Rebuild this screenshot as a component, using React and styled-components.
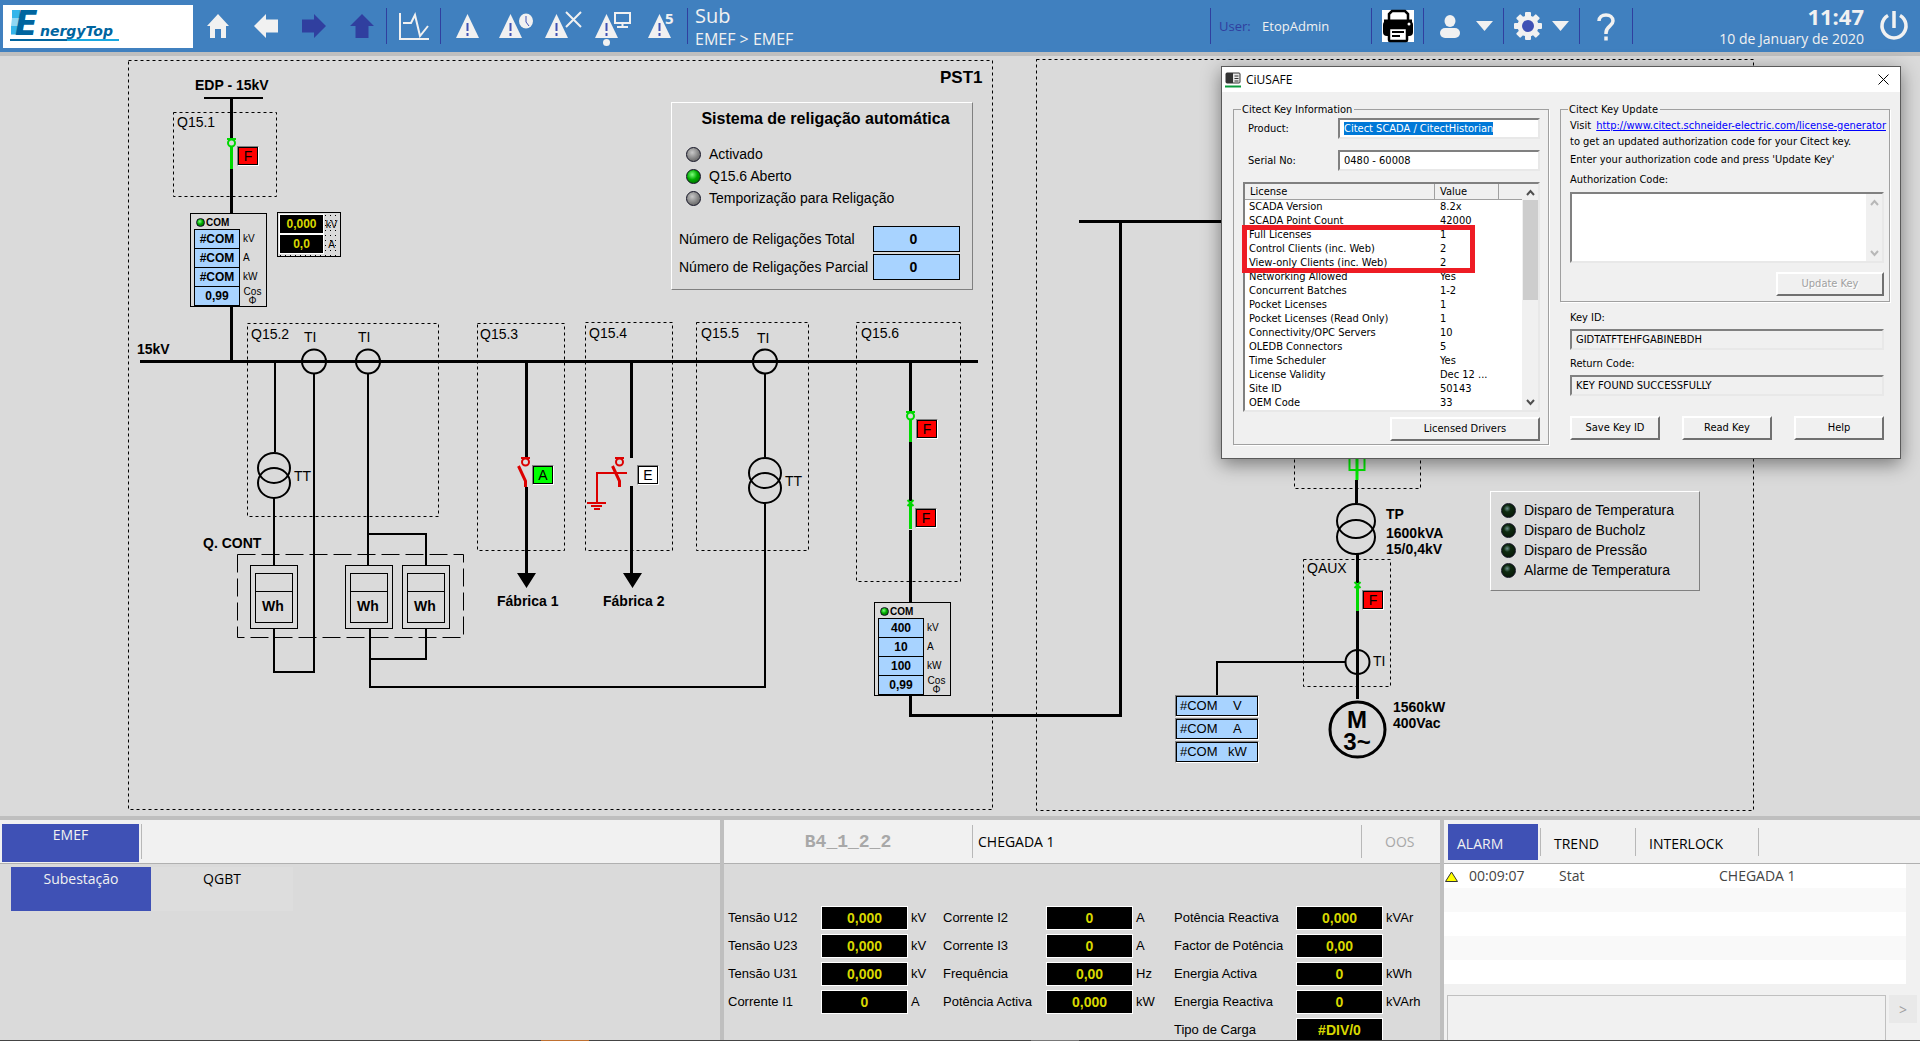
import React, { useEffect, useRef } from "react";
import styled, { createGlobalStyle } from "styled-components";

const GlobalStyle = createGlobalStyle`
  * {
    box-sizing: border-box;
  }

  body {
    margin: 0;
    background: #dadada;
    font-family: "Open Sans", "Noto Sans", sans-serif;
    font-size: 14px;
  }

  button, input, textarea {
    font: inherit;
    margin: 0;
  }
`;

const navy = "#303f9f";
const indigo = "#3f51b5";
const arial = `"Liberation Sans", Arial, sans-serif`;

// everything in the mimic is placed in screen coordinates, the bar takes the first 56px
const BAR = 56;

/* ---------- page ---------- */

const Page = styled.div`
  position: relative;
  display: flex;
  flex-direction: column;
  min-height: 100vh;
  overflow: hidden;
`;

const TopBar = styled.header`
  display: flex;
  flex: none;
  align-items: center;
  height: 56px;
  padding-left: 3px;
  background: #4080bf;
  border-bottom: 4px solid #bfbfbf;
  color: #f1f1f1;
`;

const LogoBox = styled.a`
  display: block;
  width: 190px;
  height: 43px;
  margin-right: 1px;
  background: white;
`;

const IconButton = styled.button`
  display: flex;
  align-items: center;
  justify-content: center;
  width: ${(p) => p.$width || 48}px;
  height: 40px;
  padding: 0;
  border: 0;
  background: none;
  color: ${(p) => p.$color || "#f1f1f1"};
  cursor: pointer;

  svg {
    flex: none;
    overflow: visible;
  }
`;

const MenuButton = styled(IconButton)`
  width: 18px;
  margin-right: 9px;
`;

const Rule = styled.i`
  width: 1px;
  height: 36px;
  background: ${navy};
`;

const Alerts = styled.div`
  display: flex;
  gap: 12px;
  padding: 0 14px 0 15px;
`;

const Titles = styled.div`
  flex: 1;
  padding-left: 7px;
`;

const Title = styled.h1`
  margin: 0;
  font-size: 20px;
  font-weight: 400;
  line-height: 26px;
`;

const Crumbs = styled.p`
  margin: 0;
  font-size: 16px;
  line-height: 20px;
`;

const UserInfo = styled.p`
  width: 160px;
  margin: 0;
  padding-left: 8px;
  font-size: 13px;

  span {
    margin-right: 8px;
    color: ${navy};
  }
`;

const Clock = styled.div`
  flex: 0 0 235px;
  padding-right: 4px;
  text-align: right;

  strong {
    display: block;
    font-size: 22px;
    line-height: 26px;
  }

  span {
    line-height: 20px;
  }
`;

/* ---------- mimic ---------- */

const Mimic = styled.main`
  position: relative;
  flex: 1;
  min-height: 760px;
  overflow: hidden;
  font-family: ${arial};
`;

const Drawing = styled.svg`
  display: block;
  width: 1920px;
  height: 760px;
  fill: none;
  stroke: black;
`;

const Label = styled.text`
  fill: black;
  stroke: none;
  font-size: ${(p) => p.$size || 14}px;
  font-weight: ${(p) => (p.$bold ? 700 : 400)};
`;

const Node = styled.div`
  position: absolute;
  left: ${(p) => p.$x}px;
  top: ${(p) => p.$y - BAR}px;
`;

const TagBox = styled(Node)`
  width: 22px;
  height: 20px;
  border: 1px solid;
  border-color: #808080 white white #808080;

  span {
    display: block;
    height: 18px;
    border: 1px solid black;
    background: ${(p) => p.$fill};
    font-size: 14px;
    line-height: 17px;
    text-align: center;
  }
`;

const Raised = styled(Node)`
  border: 1px solid;
  border-color: white #808080 #808080 white;
  font-size: 14px;
`;

const leds = {
  gray: "radial-gradient(circle at 40% 35%, #c8c8c8, #7c7c7c 60%, #555)",
  green: "radial-gradient(circle at 40% 35%, #7dff7d, #0a0 45%, #005500)",
  dark: "radial-gradient(circle at 40% 35%, #6b8f8b, #0e2a10 30%, #041004)",
};

const Led = styled.i`
  flex: none;
  width: ${(p) => p.$size || 15}px;
  height: ${(p) => p.$size || 15}px;
  border: 1px solid #112;
  border-radius: 50%;
  background: ${(p) => leds[p.$tone]};
`;

const AutoPanel = styled(Raised)`
  width: 302px;
  height: 188px;
  padding: 6px 12px 0 7px;

  h2 {
    margin: 0 0 14px;
    padding-left: 12px;
    font-size: 16px;
    line-height: 20px;
    text-align: center;
  }
`;

const LedLine = styled.p`
  display: flex;
  align-items: center;
  gap: 8px;
  height: ${(p) => p.$pitch || 22}px;
  margin: 0;
  padding-left: 7px;
`;

const Counters = styled.div`
  display: grid;
  gap: 2px;
  margin-top: 17px;
`;

const Counter = styled.label`
  display: flex;
  align-items: center;
  justify-content: space-between;
  white-space: nowrap;

  output {
    width: 87px;
    height: 26px;
    padding-right: 6px;
    border: 1px solid black;
    background: #a8d3ff;
    font-weight: 700;
    line-height: 24px;
    text-align: center;
  }
`;

const TripPanel = styled(Raised)`
  width: 210px;
  height: 100px;
  padding: 8px 3px;
`;

const ComBox = styled(Node)`
  width: 77px;
  height: 94px;
  padding: 2px 3px;
  border: 1px solid black;
  background: #dadada;
  font-size: 10px;

  header {
    display: flex;
    align-items: center;
    gap: 1px;
    height: 13px;
    padding-left: 2px;
    font-weight: 700;
  }
`;

const ComRow = styled.div`
  display: flex;
  align-items: center;
  gap: 3px;
  height: 19px;
  line-height: 9px;

  b {
    display: block;
    width: 46px;
    height: 20px;
    border: 1px solid black;
    background: #a8d3ff;
    font-size: 12px;
    line-height: 18px;
    text-align: center;
  }

  span {
    max-width: 19px;
    text-align: center;
  }
`;

const MiniMeter = styled(Node)`
  display: grid;
  grid-template-columns: 45px 1fr;
  align-content: start;
  align-items: center;
  width: 64px;
  height: 45px;
  padding: 1px;
  border: 1px solid black;
  background: radial-gradient(black 0.5px, transparent 0.5px) 0 0 / 5px 5px #dadada;
  font-size: 10px;
  text-align: center;

  b {
    height: 20px;
    border: 1px solid white;
    background: black;
    color: #d8d800;
    font-size: 12px;
    line-height: 18px;
  }
`;

const ComField = styled(Node)`
  width: 84px;
  height: 22px;
  border: 1px solid;
  border-color: #808080 white white #808080;

  div {
    display: flex;
    height: 20px;
    padding-left: 3px;
    border: 1px solid black;
    background: #a8d3ff;
    font-size: 13px;
    line-height: 18px;
  }

  span {
    flex: 1;
    text-align: center;
  }
`;

/* ---------- dialog ---------- */

const Dialog = styled.section`
  position: absolute;
  left: 1221px;
  top: 66px;
  width: 680px;
  border: 1px solid #5a5a5a;
  background: #f0f0f0;
  box-shadow: 0 5px 18px rgba(0, 0, 0, 0.45);
  color: black;
  font-family: "DejaVu Sans Condensed", "Open Sans", sans-serif;
  font-size: 11px;
  line-height: 16px;
`;

const DialogTitle = styled.header`
  display: flex;
  align-items: center;
  gap: 5px;
  height: 25px;
  padding: 0 9px 0 3px;
  background: white;
  font-family: "Open Sans", sans-serif;

  h2 {
    flex: 1;
    margin: 0;
    font-size: 12px;
    font-weight: 400;
  }

  button {
    display: flex;
    padding: 2px;
    border: 0;
    background: none;
  }
`;

const DialogBody = styled.div`
  display: grid;
  grid-template-columns: 316px 330px;
  gap: 11px;
  padding: 10px 11px 13px;
`;

const Group = styled.fieldset`
  min-width: 0;
  margin: 0;
  padding: ${(p) => p.$pad};
  border: 1px solid #a0a0a0;
  box-shadow: 1px 1px 0 white;

  legend {
    height: 14px;
    margin-left: ${(p) => p.$indent}px;
    padding: 0 2px 0 1px;
    line-height: 16px;
  }
`;

const sunken = `
  border: 2px solid;
  border-color: #808080 #e8e8e8 #e8e8e8 #808080;
  border-radius: 0;
  outline: 0;
`;

const Field = styled.input`
  ${sunken}
  display: block;
  width: 100%;
  height: 21px;
  padding: 0 4px;
  background: ${(p) => (p.readOnly && p.$flat ? "#f0f0f0" : "white")};

  &::selection {
    background: #0078d7;
    color: white;
  }
`;

const FieldRow = styled.div`
  display: grid;
  grid-template-columns: 95px 1fr;
  align-items: center;
  margin-bottom: 11px;

  label {
    padding-left: 5px;
  }
`;

const WinButton = styled.button`
  width: ${(p) => p.$width || 90}px;
  height: 24px;
  padding: 0;
  border: 2px solid;
  border-color: white #707070 #707070 white;
  border-radius: 0;
  background: #f0f0f0;
  color: black;

  &:disabled {
    color: #a0a0a0;
    text-shadow: 1px 1px white;
  }
`;

const Align = styled.div`
  display: flex;
  justify-content: ${(p) => p.$to || "flex-end"};
  margin-top: ${(p) => p.$top}px;
`;

const List = styled.div`
  ${sunken}
  display: flex;
  height: 230px;
  background: white;
`;

const Licenses = styled.table`
  flex: 1;
  align-self: flex-start;
  border-collapse: separate;
  border-spacing: 0;
  table-layout: fixed;
  line-height: 14px;

  th {
    height: 16px;
    padding: 0 0 0 5px;
    border-right: 1px solid #a0a0a0;
    border-bottom: 1px solid #a0a0a0;
    background: #f0f0f0;
    font-weight: 400;
    text-align: left;
  }

  th:last-child {
    border-right: 0;
  }

  td {
    height: 14px;
    padding: 0 0 0 4px;
    white-space: nowrap;
  }

  td + td {
    padding-left: 5px;
  }
`;

const Scroll = styled.div`
  display: flex;
  flex-direction: column;
  align-items: center;
  justify-content: space-between;
  width: ${(p) => p.$width || 16}px;
  background: #f0f0f0;
  color: ${(p) => p.$color || "#505050"};

  i {
    width: 15px;
    height: 100px;
    margin-bottom: 94px;
    background: #cdcdcd;
  }
`;

const Marker = styled.div`
  position: absolute;
  left: 20px;
  top: 158px;
  width: 233px;
  height: 48px;
  border: 5px solid #ee1c24;
`;

const Line = styled.p`
  margin: 0;
  padding-top: ${(p) => p.$top || 0}px;
  white-space: nowrap;

  a {
    margin-left: 2px;
    color: #0000ff;
  }
`;

const CodeBox = styled.div`
  ${sunken}
  display: flex;
  height: 71px;
  margin-top: 4px;
  background: white;

  textarea {
    flex: 1;
    padding: 2px;
    border: 0;
    outline: 0;
    background: white;
    resize: none;
  }
`;

const KeyFields = styled.div`
  padding: 8px 6px 0 10px;

  label {
    display: block;
    margin-bottom: 3px;
  }

  input {
    margin-bottom: 6px;
  }
`;

/* ---------- lower panels ---------- */

const Panels = styled.div`
  display: grid;
  flex: none;
  grid-template-columns: 3fr 3fr 2fr;
  height: 224px;
  border-top: 4px solid #bfbfbf;
  overflow: hidden;
`;

const Panel = styled.section`
  min-width: 0;
  height: 220px;

  & + & {
    border-left: 4px solid #bfbfbf;
  }
`;

const Strip = styled.div`
  display: flex;
  height: 44px;
  padding: ${(p) => p.$pad || "4px 0 0 2px"};
  border-bottom: 1px solid #b0b0b0;
  background: #f1f1f1;
`;

const Tab = styled.button`
  width: ${(p) => p.$width}px;
  height: ${(p) => p.$height}px;
  padding: 0 0 ${(p) => p.$lift || 0}px;
  border: 0;
  background: ${(p) => (p.$on ? indigo : p.$bg || "transparent")};
  color: ${(p) => (p.$on ? "#f1f1f1" : "black")};
`;

const Thin = styled.i`
  width: 1px;
  height: ${(p) => p.$height}px;
  margin: ${(p) => p.$margin || "0 0 0 2px"};
  background: #b8b8b8;
`;

const SubTabs = styled.div`
  display: flex;
  padding: 3px 0 0 11px;
`;

const TagName = styled.div`
  width: 248px;
  color: #a8a8a8;
  font-family: "Liberation Mono", monospace;
  font-size: 18px;
  font-weight: 700;
  line-height: 34px;
  text-align: center;
`;

const TagText = styled.div`
  flex: ${(p) => p.$flex || "0 0 78px"};
  padding-left: ${(p) => p.$left}px;
  color: ${(p) => p.$color || "black"};
  line-height: 34px;
`;

const Readings = styled.div`
  display: grid;
  grid-template-columns: 215px 231px 1fr;
  padding: 42px 0 0 4px;
  font-family: ${arial};
  font-size: 13px;
`;

const Reading = styled.div`
  display: grid;
  grid-template-columns: ${(p) => p.$label}px 87px 1fr;
  height: 24px;
  margin-bottom: 4px;
  line-height: 23px;
  white-space: nowrap;

  output {
    border: 1px solid white;
    background: black;
    color: #d8d800;
    font-size: 14px;
    font-weight: 700;
    line-height: 22px;
    text-align: center;
  }

  span {
    padding-left: 3px;
  }
`;

const AlarmPanel = styled(Panel)`
  background: #f1f1f1;
`;

const AlarmTab = styled.button`
  height: 36px;
  width: ${(p) => p.$width}px;
  padding: 2px 0 0 ${(p) => p.$left}px;
  border: 0;
  background: ${(p) => (p.$on ? indigo : "transparent")};
  color: ${(p) => (p.$on ? "#f1f1f1" : "black")};
  text-align: left;
`;

const AlarmTable = styled.table`
  width: calc(100% - 14px);
  border-spacing: 0;
  table-layout: fixed;
  color: #444;

  td {
    height: 24px;
    padding: 0 1px;
    line-height: 20px;
  }

  tr {
    background: white;
  }

  tr:nth-child(even) {
    background: #f9f9f9;
  }

  svg {
    display: block;
  }
`;

const Detail = styled.div`
  display: flex;
  gap: 3px;
  padding: 11px 3px 0;

  textarea {
    flex: 1;
    height: 50px;
    border: 1px solid #c0c0c0;
    outline: 0;
    background: #f1f1f1;
    resize: none;
  }

  button {
    width: 28px;
    height: 28px;
    padding: 0;
    border: 0;
    background: #e9e9e9;
    color: #a0a0a0;
  }
`;

const Edge = styled.footer`
  height: 1px;
  background: linear-gradient(
    90deg,
    #444 541px,
    #c07030 541px,
    #c07030 589px,
    #444 589px,
    #444 1031px,
    #777 1031px,
    #777 1079px,
    #444 1079px
  );
`;

/* ---------- icons ---------- */

const Logo = () => (
  <svg width="190" height="43" role="img" aria-label="EnergyTop">
    <path d="M9 5h8v8H9z" fill="#35b5ea" />
    <path d="M9 13h7v8H8z" fill="#8fd6f3" />
    <path d="M8 21h7v8H8z" fill="#35b5ea" />
    <path d="M8 29h7v-2h5l-3 3H8z" fill="#8fd6f3" />
    <text x="12" y="30" fill="#00659f" fontSize="33" fontWeight="700" fontStyle="italic" fontFamily="DejaVu Sans">
      E
    </text>
    <text x="37" y="31" fill="#00659f" fontSize="14" fontWeight="700" fontStyle="italic" fontFamily="DejaVu Sans">
      nergyTop
    </text>
    <path d="M7 35h57" stroke="#00659f" strokeWidth="2" />
    <path d="M64 35h52" stroke="#18a8e0" strokeWidth="2" />
  </svg>
);

const Home = () => (
  <svg width="22" height="24" fill="currentColor">
    <path d="M11 0 22 12h-3v12h-5v-9H8v9H3V12H0z" />
  </svg>
);

const Arrow = ({ turn }) => (
  <svg width="24" height="24" fill="currentColor">
    <path d="M0 12 12 0v5.500h12v13H12V24z" transform={`rotate(${turn} 12 12)`} />
  </svg>
);

const Chart = () => (
  <svg width="30" height="27" fill="none" stroke="currentColor" strokeWidth="2">
    <path d="M1 0v26h29M4 10h8l4-8 5 21 8-10" />
  </svg>
);

const Alert = ({ width, children }) => (
  <svg width={width} height="24" fill="currentColor">
    <path d="M11.500 0 23 24H0z" />
    <path d="M11.500 9v8M11.500 19v3" stroke={indigo} strokeWidth="2" />
    {children}
  </svg>
);

const Caret = () => (
  <svg width="18" height="10" fill="currentColor">
    <path d="M0 0h17L8.500 10z" />
  </svg>
);

const Printer = () => (
  <svg width="32" height="32">
    <path d="M0 0h32v32H0z" fill="white" />
    <rect x="1" y="11" width="30" height="15" rx="4" fill="black" />
    <path d="M7 12V4l3-3h13l3 3v8z" fill="white" stroke="black" strokeWidth="2.500" />
    <path d="M2 11h28" stroke="black" strokeWidth="3" />
    <rect x="7" y="18" width="18" height="13" rx="1" fill="white" stroke="black" strokeWidth="2.500" />
    <path d="M10 22h12M10 26h8" stroke="black" strokeWidth="2" />
    <circle cx="27" cy="14" r="1.500" fill="white" />
  </svg>
);

const Person = () => (
  <svg width="20" height="23" fill="currentColor">
    <ellipse cx="10" cy="6" rx="5.500" ry="6" />
    <rect x="0" y="13" width="20" height="10" rx="5" />
  </svg>
);

const Gear = () => (
  <svg width="28" height="28" fill="currentColor">
    {[0, 45, 90, 135].map((a) => (
      <rect key={a} x="11" y="0" width="6" height="28" rx="1" transform={`rotate(${a} 14 14)`} />
    ))}
    <circle cx="14" cy="14" r="10.500" />
    <circle cx="14" cy="14" r="6" fill={indigo} />
  </svg>
);

const Help = () => (
  <svg width="18" height="27" fill="none" stroke="currentColor" strokeWidth="3.500">
    <path d="M2 8c0-4 3-6 7-6s7 2 7 6c0 5-7 5-7 12v1" />
    <path d="M9 23.500v4" />
  </svg>
);

const Power = () => (
  <svg width="28" height="30" fill="none" stroke="currentColor" strokeWidth="3.500">
    <path d="M14 0v17M8 4.500a12 12 0 1 0 12 0" />
  </svg>
);

const Chevron = ({ up }) => (
  <svg width="15" height="16" fill="none" stroke="currentColor" strokeWidth="2">
    <path d={up ? "M4 11l3.500-4L11 11" : "M4 6l3.500 4L11 6"} />
  </svg>
);

/* ---------- mimic symbols ---------- */

const Frame = ({ x, y, r, b, dash = "3 3" }) => (
  <rect x={x + 0.5} y={y + 0.5} width={r - x} height={b - y} strokeDasharray={dash} />
);

const Coil = ({ x, y }) => <circle cx={x} cy={y} r="12" strokeWidth="2" />;

const Transformer = ({ x, y, rx = 16, ry = 15, step = 15 }) => (
  <g strokeWidth="2">
    <ellipse cx={x} cy={y + ry} rx={rx} ry={ry} />
    <ellipse cx={x} cy={y + ry + step} rx={rx} ry={ry} />
  </g>
);

const Meter = ({ x }) => (
  <g>
    <rect x={x + 0.5} y="565.5" width="47" height="63" />
    <rect x={x + 5.5} y="573.5" width="37" height="49" />
    <path d={`M${x + 5} 591.500h38`} />
    <Label x={x + 23} y="611" textAnchor="middle" $bold>
      Wh
    </Label>
  </g>
);

const Switch = ({ x, y }) => (
  <g stroke="#00d800" strokeWidth="2">
    <path d={`M${x - 4.5} ${y}h9`} />
    <circle cx={x} cy={y + 4} r="3.500" />
    <path d={`M${x} ${y + 8}v22`} strokeWidth="3" />
  </g>
);

const Breaker = ({ x, y }) => (
  <g stroke="#00d800" strokeWidth="2">
    <path d={`M${x - 3} ${y - 3}l6 6m0-6l-6 6`} />
    <path d={`M${x} ${y}v26`} strokeWidth="3" />
  </g>
);

const OpenSwitch = ({ x }) => (
  <g stroke="#dc0000" strokeWidth="2">
    <path d={`M${x - 4.5} 458h9`} />
    <circle cx={x} cy="462" r="3.500" />
    <path d={`M${x - 7} 466l7 15v6`} strokeWidth="3" />
  </g>
);

const Tag = ({ x, y, fill = "#f00", children }) => (
  <TagBox $x={x} $y={y} $fill={fill}>
    <span>{children}</span>
  </TagBox>
);

const Com = ({ x, y, values }) => (
  <ComBox $x={x} $y={y}>
    <header>
      <Led $tone="green" $size={9} />
      COM
    </header>
    {["kV", "A", "kW", "Cos Φ"].map((unit, i) => (
      <ComRow key={unit}>
        <b>{values[i]}</b>
        <span>{unit}</span>
      </ComRow>
    ))}
  </ComBox>
);

const frames = [
  { x: 128, y: 60, r: 992, b: 809 },
  { x: 1036, y: 59, r: 1753, b: 810 },
  { x: 173, y: 112, r: 276, b: 196 },
  { x: 247, y: 323, r: 438, b: 516 },
  { x: 477, y: 323, r: 564, b: 550 },
  { x: 585, y: 322, r: 672, b: 550 },
  { x: 696, y: 322, r: 808, b: 550 },
  { x: 856, y: 322, r: 960, b: 581 },
  { x: 1294, y: 400, r: 1420, b: 488 },
  { x: 1303, y: 559, r: 1390, b: 686 },
  { x: 237, y: 554, r: 463, b: 637, dash: "18 6" },
];

const labels = [
  [177, 127, "Q15.1"],
  [251, 339, "Q15.2"],
  [480, 339, "Q15.3"],
  [589, 338, "Q15.4"],
  [701, 338, "Q15.5"],
  [861, 338, "Q15.6"],
  [304, 342, "TI"],
  [358, 342, "TI"],
  [757, 343, "TI"],
  [294, 481, "TT"],
  [785, 486, "TT"],
  [1373, 666, "TI"],
  [1307, 573, "QAUX"],
];

const boldLabels = [
  [195, 90, "EDP - 15kV"],
  [137, 354, "15kV"],
  [203, 548, "Q. CONT"],
  [497, 606, "Fábrica 1"],
  [603, 606, "Fábrica 2"],
  [1386, 519, "TP"],
  [1386, 538, "1600kVA"],
  [1386, 554, "15/0,4kV"],
  [1393, 712, "1560kW"],
  [1393, 728, "400Vac"],
];

const Substation = () => (
  <Mimic>
    <Drawing viewBox="0 56 1920 760">
      {frames.map((f) => (
        <Frame key={`${f.x}-${f.y}`} {...f} />
      ))}
      <g strokeWidth="3">
        <path d="M140 361.500H978" />
        <path d="M231.500 98v40M231.500 169v45M231.500 307v54" />
        <path d="M526.500 361v96M526.500 487v88M631.500 361v97M631.500 486v88" />
        <path d="M910.500 361v50M910.500 441v60M910.500 530v72" />
        <path d="M910.500 696v19.500h210V221.500M1079 221.500h150" />
        <path d="M1356.500 480v23M1357.500 553v30M1357.500 609v90" />
      </g>
      <g strokeWidth="2">
        <path d="M204 98h59" />
        <path d="M275 361v91M274 498v67M274 629v43h40V374" />
        <path d="M368 374v191M368 534h58v31M426 629v30h-56M370 629v58h395V503" />
        <path d="M765 374v83M1345 662h-128v34" />
      </g>
      <path d="M517 573h19l-9.500 15zM623 573h19l-9.500 15z" fill="black" stroke="none" />
      <Coil x={314} y={361.5} />
      <Coil x={368} y={361.5} />
      <Coil x={765} y={361.5} />
      <Coil x={1357.5} y={662} />
      <Transformer x={274} y={453} />
      <Transformer x={765} y={458} />
      <Transformer x={1356} y={504} rx={19} ry={17} step={16} />
      <Meter x={250} />
      <Meter x={345} />
      <Meter x={402} />
      <Switch x={231.5} y={139} />
      <Switch x={910.5} y={412} />
      <Breaker x={910.5} y={503} />
      <Breaker x={1357.5} y={585} />
      <OpenSwitch x={525.5} />
      <OpenSwitch x={619.5} />
      <path d="M627 473h-30v30M587 503h19M591 506h11M594 509h6" stroke="#dc0000" strokeWidth="2" />
      <path d="M1349.500 440v30h15v-30" stroke="#00f000" strokeWidth="2" />
      <path d="M1357 440v40" stroke="#00f000" strokeWidth="3" />
      <circle cx="1357.500" cy="729.500" r="27.500" strokeWidth="3" />
      {labels.map(([x, y, text]) => (
        <Label key={`${x}-${y}`} x={x} y={y}>
          {text}
        </Label>
      ))}
      {boldLabels.map(([x, y, text]) => (
        <Label key={`${x}-${y}`} x={x} y={y} $bold>
          {text}
        </Label>
      ))}
      <Label x="940" y="83" $size={17} $bold>
        PST1
      </Label>
      <Label x="1357" y="728" $size={24} $bold textAnchor="middle">
        M
      </Label>
      <Label x="1357" y="750" $size={24} $bold textAnchor="middle">
        3~
      </Label>
    </Drawing>

    <Tag x={237} y={146}>F</Tag>
    <Tag x={916} y={419}>F</Tag>
    <Tag x={915} y={508}>F</Tag>
    <Tag x={1362} y={590}>F</Tag>
    <Tag x={532} y={465} fill="#0f0">A</Tag>
    <Tag x={637} y={465} fill="#fff">E</Tag>

    <Com x={190} y={213} values={["#COM", "#COM", "#COM", "0,99"]} />
    <Com x={874} y={602} values={["400", "10", "100", "0,99"]} />

    <MiniMeter $x={277} $y={212}>
      <b>0,000</b>
      <span>kV</span>
      <b>0,0</b>
      <span>A</span>
    </MiniMeter>

    <AutoPanel $x={671} $y={102}>
      <h2>Sistema de religação automática</h2>
      <LedLine>
        <Led $tone="gray" /> Activado
      </LedLine>
      <LedLine>
        <Led $tone="green" /> Q15.6 Aberto
      </LedLine>
      <LedLine>
        <Led $tone="gray" /> Temporização para Religação
      </LedLine>
      <Counters>
        <Counter>
          Número de Religações Total <output>0</output>
        </Counter>
        <Counter>
          Número de Religações Parcial <output>0</output>
        </Counter>
      </Counters>
    </AutoPanel>

    <TripPanel $x={1490} $y={491}>
      {["Disparo de Temperatura", "Disparo de Bucholz", "Disparo de Pressão", "Alarme de Temperatura"].map((text) => (
        <LedLine key={text} $pitch={20}>
          <Led $tone="dark" /> {text}
        </LedLine>
      ))}
    </TripPanel>

    {["V", "A", "kW"].map((unit, i) => (
      <ComField key={unit} $x={1175} $y={695 + i * 23}>
        <div>
          #COM <span>{unit}</span>
        </div>
      </ComField>
    ))}
  </Mimic>
);

/* ---------- top bar ---------- */

const Bar = () => (
  <TopBar>
    <LogoBox href="#">
      <Logo />
    </LogoBox>
    <IconButton aria-label="Home"><Home /></IconButton>
    <IconButton aria-label="Back"><Arrow turn={0} /></IconButton>
    <IconButton aria-label="Forward" $color={navy}><Arrow turn={180} /></IconButton>
    <IconButton aria-label="Up" $color={navy}><Arrow turn={90} /></IconButton>
    <Rule />
    <IconButton aria-label="Trend" $width={53}><Chart /></IconButton>
    <Rule />
    <Alerts>
      <IconButton aria-label="Active alarms" $width={31}>
        <Alert width={31} />
      </IconButton>
      <IconButton aria-label="Alarm history" $width={34}>
        <Alert width={34}>
          <ellipse cx="27" cy="7" rx="7" ry="7.500" />
          <path d="M27 2v6l3 4" fill="none" stroke={indigo} />
        </Alert>
      </IconButton>
      <IconButton aria-label="Disabled alarms" $width={38}>
        <Alert width={38}>
          <path d="M21-2 36 13M36-2 21 13" stroke="currentColor" strokeWidth="2" />
        </Alert>
      </IconButton>
      <IconButton aria-label="System alarms" $width={41}>
        <Alert width={41}>
          <path d="M20-1h15v10H20zM27.500 9v4M22 13h11" fill="none" stroke="currentColor" strokeWidth="2" />
          <circle cx="11.500" cy="28.500" r="3.500" />
        </Alert>
      </IconButton>
      <IconButton aria-label="Last five alarms" $width={25}>
        <Alert width={25}>
          <text x="17" y="10" fontSize="15" fontWeight="700">5</text>
        </Alert>
      </IconButton>
    </Alerts>
    <Rule />
    <Titles>
      <Title>Sub</Title>
      <Crumbs>EMEF &gt; EMEF</Crumbs>
    </Titles>
    <Rule />
    <UserInfo>
      <span>User:</span> EtopAdmin
    </UserInfo>
    <Rule />
    <IconButton aria-label="Print" $width={51}><Printer /></IconButton>
    <Rule />
    <IconButton aria-label="Users" $width={52}><Person /></IconButton>
    <MenuButton aria-label="Users menu"><Caret /></MenuButton>
    <Rule />
    <IconButton aria-label="Settings" $width={48}><Gear /></IconButton>
    <MenuButton aria-label="Settings menu"><Caret /></MenuButton>
    <Rule />
    <IconButton aria-label="Help" $width={52}><Help /></IconButton>
    <Rule />
    <Clock>
      <strong>11:47</strong>
      <span>10 de January de 2020</span>
    </Clock>
    <IconButton aria-label="Log out" $width={52}><Power /></IconButton>
  </TopBar>
);

/* ---------- key dialog ---------- */

const licenses = [
  ["SCADA Version", "8.2x"],
  ["SCADA Point Count", "42000"],
  ["Full Licenses", "1"],
  ["Control Clients (inc. Web)", "2"],
  ["View-only Clients (inc. Web)", "2"],
  ["Networking Allowed", "Yes"],
  ["Concurrent Batches", "1-2"],
  ["Pocket Licenses", "1"],
  ["Pocket Licenses (Read Only)", "1"],
  ["Connectivity/OPC Servers", "10"],
  ["OLEDB Connectors", "5"],
  ["Time Scheduler", "Yes"],
  ["License Validity", "Dec 12 ..."],
  ["Site ID", "50143"],
  ["OEM Code", "33"],
];

const KeyDialog = () => {
  const product = useRef(null);

  useEffect(() => {
    product.current.select();
  }, []);

  return (
    <Dialog role="dialog" aria-label="CiUSAFE">
      <DialogTitle>
        <svg width="16" height="16">
          <rect x="1" y="1" width="14" height="10" rx="1" fill="#e8e8e8" stroke="#333" />
          <path d="M1 1h7v10H1z" fill="#333" />
          <path d="M9.500 4h4M9.500 6.500h4M9.500 9h4" stroke="#333" />
          <path d="M0 14.500h16" stroke="#0a9a3c" strokeWidth="2" />
        </svg>
        <h2>CiUSAFE</h2>
        <button aria-label="Close">
          <svg width="11" height="11" stroke="black">
            <path d="M0.500 0.500l10 10M10.500 0.500l-10 10" />
          </svg>
        </button>
      </DialogTitle>
      <DialogBody>
        <Group $pad="2px 8px 3px 9px" $indent={-2}>
          <legend>Citect Key Information</legend>
          <FieldRow>
            <label htmlFor="product">Product:</label>
            <Field id="product" ref={product} defaultValue="Citect SCADA / CitectHistorian" />
          </FieldRow>
          <FieldRow>
            <label htmlFor="serial">Serial No:</label>
            <Field id="serial" defaultValue="0480 - 60008" />
          </FieldRow>
          <List>
            <Licenses>
              <colgroup>
                <col width="190" />
                <col width="64" />
                <col />
              </colgroup>
              <thead>
                <tr>
                  <th>License</th>
                  <th>Value</th>
                  <th />
                </tr>
              </thead>
              <tbody>
                {licenses.map(([name, value]) => (
                  <tr key={name}>
                    <td>{name}</td>
                    <td colSpan="2">{value}</td>
                  </tr>
                ))}
              </tbody>
            </Licenses>
            <Scroll>
              <Chevron up />
              <i />
              <Chevron />
            </Scroll>
          </List>
          <Align $top={5}>
            <WinButton $width={150}>Licensed Drivers</WinButton>
          </Align>
        </Group>
        <div>
          <Group $pad="2px 5px 5px 9px" $indent={-2}>
            <legend>Citect Key Update</legend>
            <Line>
              Visit <a href="#license">http://www.citect.schneider-electric.com/license-generator</a>
            </Line>
            <Line>to get an updated authorization code for your Citect key.</Line>
            <Line $top={2}>Enter your authorization code and press 'Update Key'</Line>
            <Line $top={4}>
              <label htmlFor="code">Authorization Code:</label>
            </Line>
            <CodeBox>
              <textarea id="code" />
              <Scroll $color="#b8b8b8">
                <Chevron up />
                <Chevron />
              </Scroll>
            </CodeBox>
            <Align $top={9}>
              <WinButton $width={108} disabled>
                Update Key
              </WinButton>
            </Align>
          </Group>
          <KeyFields>
            <label htmlFor="keyid">Key ID:</label>
            <Field id="keyid" readOnly $flat value="GIDTATFTEHFGABINEBDH" />
            <label htmlFor="return">Return Code:</label>
            <Field id="return" readOnly $flat value="KEY FOUND SUCCESSFULLY" />
            <Align $top={20} $to="space-between">
              <WinButton>Save Key ID</WinButton>
              <WinButton>Read Key</WinButton>
              <WinButton>Help</WinButton>
            </Align>
          </KeyFields>
        </div>
      </DialogBody>
      <Marker />
    </Dialog>
  );
};

/* ---------- lower panels ---------- */

const readings = [
  {
    label: 93,
    rows: [
      ["Tensão U12", "0,000", "kV"],
      ["Tensão U23", "0,000", "kV"],
      ["Tensão U31", "0,000", "kV"],
      ["Corrente I1", "0", "A"],
    ],
  },
  {
    label: 103,
    rows: [
      ["Corrente I2", "0", "A"],
      ["Corrente I3", "0", "A"],
      ["Frequência", "0,00", "Hz"],
      ["Potência Activa", "0,000", "kW"],
    ],
  },
  {
    label: 122,
    rows: [
      ["Potência Reactiva", "0,000", "kVAr"],
      ["Factor de Potência", "0,00", ""],
      ["Energia Activa", "0", "kWh"],
      ["Energia Reactiva", "0", "kVArh"],
      ["Tipo de Carga", "#DIV/0", ""],
    ],
  },
];

const Lower = () => (
  <Panels>
    <Panel>
      <Strip>
        <Tab $on $width={137} $height={38} $lift={18}>EMEF</Tab>
        <Thin $height={35} />
      </Strip>
      <SubTabs>
        <Tab $on $width={140} $height={44} $lift={22}>Subestação</Tab>
        <Tab $bg="#dddddd" $width={142} $height={44} $lift={22}>QGBT</Tab>
      </SubTabs>
    </Panel>
    <Panel>
      <Strip $pad="5px 0 0">
        <TagName>B4_1_2_2</TagName>
        <Thin $height={33} $margin="0" />
        <TagText $flex="1" $left={5}>CHEGADA 1</TagText>
        <Thin $height={33} $margin="0" />
        <TagText $left={23} $color="#a8a8a8">OOS</TagText>
      </Strip>
      <Readings>
        {readings.map((col) => (
          <div key={col.label}>
            {col.rows.map(([name, value, unit]) => (
              <Reading key={name} $label={col.label}>
                <div>{name}</div>
                <output>{value}</output>
                <span>{unit}</span>
              </Reading>
            ))}
          </div>
        ))}
      </Readings>
    </Panel>
    <AlarmPanel>
      <Strip $pad="4px 0 0 4px">
        <AlarmTab $on $width={90} $left={9}>ALARM</AlarmTab>
        <Thin $height={28} $margin="4px 0 0 2px" />
        <AlarmTab $width={94} $left={13}>TREND</AlarmTab>
        <Thin $height={28} $margin="4px 0 0" />
        <AlarmTab $width={122} $left={13}>INTERLOCK</AlarmTab>
        <Thin $height={28} $margin="4px 0 0" />
      </Strip>
      <AlarmTable>
        <colgroup>
          <col width="24" />
          <col width="90" />
          <col width="160" />
          <col />
        </colgroup>
        <tbody>
          <tr>
            <td>
              <svg width="13" height="11">
                <path d="M6.500 1 12.500 10.500H0.500z" fill="#ff0" stroke="#333" />
              </svg>
            </td>
            <td>00:09:07</td>
            <td>Stat</td>
            <td>CHEGADA 1</td>
          </tr>
          {[1, 2, 3, 4].map((n) => (
            <tr key={n}>
              <td colSpan="4" />
            </tr>
          ))}
        </tbody>
      </AlarmTable>
      <Detail>
        <textarea aria-label="Alarm detail" readOnly />
        <button>&gt;</button>
      </Detail>
    </AlarmPanel>
  </Panels>
);

export default () => (
  <Page>
    <GlobalStyle />
    <Bar />
    <Substation />
    <Lower />
    <Edge />
    <KeyDialog />
  </Page>
);
